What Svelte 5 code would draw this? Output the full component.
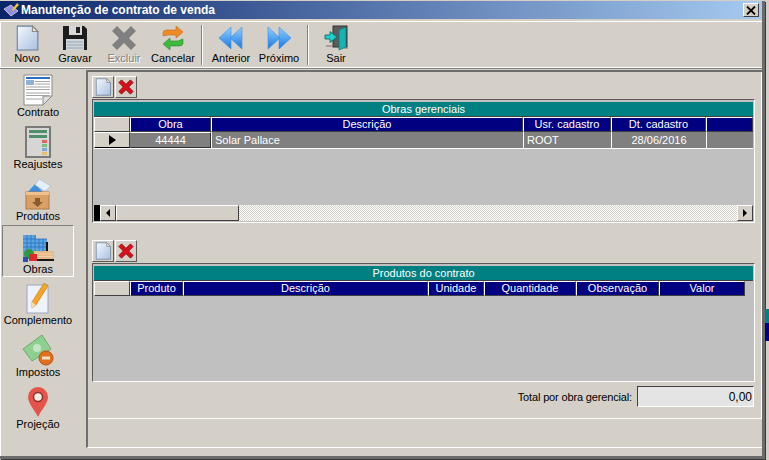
<script>
  const tools = [
    { id: 'novo', label: 'Novo', w: 48 },
    { id: 'gravar', label: 'Gravar', w: 48 },
    { id: 'excluir', label: 'Excluir', w: 50, off: true },
    { id: 'cancelar', label: 'Cancelar', w: 48, sep: true },
    { id: 'anterior', label: 'Anterior', w: 48 },
    { id: 'proximo', label: 'Próximo', w: 48, sep: true },
    { id: 'sair', label: 'Sair', w: 46 }
  ];
  const side = [
    { id: 'contrato', label: 'Contrato' },
    { id: 'reajustes', label: 'Reajustes' },
    { id: 'produtos', label: 'Produtos' },
    { id: 'obras', label: 'Obras', on: true },
    { id: 'complemento', label: 'Complemento' },
    { id: 'impostos', label: 'Impostos' },
    { id: 'projecao', label: 'Projeção' }
  ];
  const obrasCols = [['Obra', 81], ['Descrição', 312], ['Usr. cadastro', 88], ['Dt. cadastro', 95], ['', 47]];
  const prodCols = [['Produto', 53], ['Descrição', 245], ['Unidade', 56], ['Quantidade', 92], ['Observação', 83], ['Valor', 86]];
</script>

{#snippet doc(size)}
  <svg width={size} height={size} viewBox="0 0 24 24">
    <defs><linearGradient id="dg" x1="0" y1="0" x2="1" y2="1"><stop offset="0" stop-color="#f4f8ff"/><stop offset="1" stop-color="#a9c0e0"/></linearGradient></defs>
    <path d="M3 1H17L22 6V23H3Z" fill="url(#dg)" stroke="#6f7f9a"/>
    <path d="M17 1V6H22Z" fill="#e8e8e8" stroke="#8a8a8a"/>
  </svg>
{/snippet}

{#snippet redx()}
  <svg width="16" height="16" viewBox="0 0 18 18">
    <path d="M4 1L9 6L14 1L17 4L12 9L17 14L14 17L9 12L4 17L1 14L6 9L1 4Z" fill="#d8101c" stroke="#8c0a10" stroke-width="1"/>
  </svg>
{/snippet}

{#snippet toolIcon(id)}
  {#if id === 'novo'}
    {@render doc(26)}
  {:else if id === 'gravar'}
    <svg width="26" height="26" viewBox="0 0 26 26">
      <path d="M1 1H22L25 4V25H1Z" fill="#1c1c1c"/>
      <rect x="7" y="1" width="13" height="9" fill="#d8d8d8"/>
      <rect x="14" y="2" width="4" height="6" fill="#222"/>
      <rect x="4" y="14" width="18" height="11" fill="#cfd6dd"/>
      <path d="M5 17H21M5 20H21M5 23H21" stroke="#98a2ad"/>
    </svg>
  {:else if id === 'excluir'}
    <svg width="26" height="26" viewBox="0 0 26 26">
      <path d="M6 1L13 8L20 1L25 6L18 13L25 20L20 25L13 18L6 25L1 20L8 13L1 6Z" fill="#808080"/>
    </svg>
  {:else if id === 'cancelar'}
    <svg width="24" height="26" viewBox="0 0 24 26">
      <path d="M2 11V8Q2 5 6 5H15V1L22 7L15 13V10H7Z" fill="#f08a24" stroke="#c06818" stroke-width=".6"/>
      <path d="M22 14V18Q22 21 18 21H9V25L2 19L9 13V16H17Z" fill="#3ebb3e" stroke="#1f8a28" stroke-width=".6"/>
    </svg>
  {:else if id === 'anterior'}
    <svg width="24" height="24" viewBox="0 0 24 24">
      <defs><linearGradient id="ba" x1="0" y1="0" x2="0" y2="1"><stop offset="0" stop-color="#8fd0ff"/><stop offset="1" stop-color="#1a78e0"/></linearGradient></defs>
      <path d="M0 12L12 1V23Z M11 12L23 1V23Z" fill="url(#ba)" stroke="#3c8fe8" stroke-width=".6"/>
    </svg>
  {:else if id === 'proximo'}
    <svg width="24" height="24" viewBox="0 0 24 24">
      <path d="M24 12L12 1V23Z M13 12L1 1V23Z" fill="url(#ba)" stroke="#3c8fe8" stroke-width=".6"/>
    </svg>
  {:else if id === 'sair'}
    <svg width="24" height="26" viewBox="0 0 24 26">
      <rect x="9" y="1" width="14" height="21" fill="#5c5c5c" stroke="#333"/>
      <path d="M15 5L22 2V22L15 25Z" fill="#14b4b4" stroke="#067070" stroke-width=".7"/>
      <path d="M1 10H6V6.500L13 12L6 17.500V14H1Z" fill="#1cd0d0" stroke="#056060" stroke-width=".8"/>
      <path d="M2 21H8M20 23H24" stroke="#777"/>
    </svg>
  {/if}
{/snippet}

{#snippet sideIcon(id)}
  {#if id === 'contrato'}
    <svg width="30" height="32" viewBox="0 0 30 32">
      <path d="M1 1H29V22L20 31H1Z" fill="#fff" stroke="#8a8a8a"/>
      <path d="M20 31V22H29Z" fill="#dedede" stroke="#8a8a8a"/>
      <rect x="3" y="3" width="24" height="2" fill="#2a6cc8"/>
      <rect x="3" y="6" width="8" height="5" fill="#8fb0d8"/>
      <path d="M12 7.500H27M12 10H27M3 13H27M3 15.500H27M3 19H27M3 21.500H26M3 25H19" stroke="#a4a4a4"/>
    </svg>
  {:else if id === 'reajustes'}
    <svg width="26" height="32" viewBox="0 0 26 32">
      <rect x="1" y="1" width="24" height="30" fill="#d6d6d6" stroke="#7a7a7a" stroke-width="2"/>
      <rect x="4" y="4" width="18" height="3" fill="#4e8f6c"/>
      <rect x="4" y="9" width="18" height="3" fill="#4e8f6c"/>
      <rect x="17" y="14" width="5" height="3" fill="#e26060"/>
      <rect x="17" y="18" width="5" height="3" fill="#79bf79"/>
      <rect x="17" y="22" width="5" height="3" fill="#7fa8de"/>
      <rect x="17" y="26" width="5" height="3" fill="#e6c064"/>
    </svg>
  {:else if id === 'produtos'}
    <svg width="26" height="32" viewBox="0 0 26 32">
      <path d="M2 15L10 6L18 14Z" fill="#3d8fe0"/>
      <path d="M14 1L26 8L20 13L10 7Z" fill="#e6eef8" stroke="#9db8d8" stroke-width=".6"/>
      <rect x="1" y="14" width="23" height="17" fill="#d9a066" stroke="#b07a44"/>
      <rect x="1" y="14" width="23" height="3" fill="#eec28e"/>
      <path d="M10 20H15V24H18L12.500 29L7 24H10Z" fill="#8a5a30"/>
    </svg>
  {:else if id === 'obras'}
    <svg width="32" height="29" viewBox="0 0 32 29">
      <path d="M1 1H14V5H25V25H1Z" fill="#5aa5e0"/>
      <path d="M1 5H25M1 9H25M1 13H25M5 1V19M9 1V19M13 1V19M17 5V19M21 5V19" stroke="#2a70c0" stroke-width=".8"/>
      <rect x="24" y="8" width="2" height="9" fill="#101010"/>
      <rect x="12" y="17" width="20" height="8" fill="#e8b888"/>
      <path d="M13 20H31M13 22.500H31" stroke="#f4d4b0"/>
      <circle cx="7" cy="20" r="5" fill="#2e9a40"/>
      <rect x="7" y="20" width="8" height="7" fill="#e02828"/>
      <rect x="1" y="23" width="5" height="5" fill="#2a50b0"/>
      <rect x="15" y="25" width="17" height="2" fill="#181818"/>
    </svg>
  {:else if id === 'complemento'}
    <svg width="24" height="32" viewBox="0 0 24 32">
      <path d="M1 3H22V31H1Z" fill="#eef2fa" stroke="#9aa8c0"/>
      <path d="M18 1L22 4L10 23L6 26L6 20Z" fill="#f4a428" stroke="#c07a14" stroke-width=".6"/>
      <path d="M6 26L6 20L10 23Z" fill="#f4dcb0"/>
    </svg>
  {:else if id === 'impostos'}
    <svg width="32" height="32" viewBox="0 0 32 32">
      <path d="M1 15L20 1L29 15L10 27Z" fill="#8fcf8f" stroke="#6bae6b"/>
      <circle cx="15" cy="14" r="4" fill="#c4e6c4"/>
      <circle cx="24" cy="24" r="7" fill="#e0701c" stroke="#b85010"/>
      <rect x="20" y="22.500" width="8" height="3" fill="#f4e0c8"/>
    </svg>
  {:else if id === 'projecao'}
    <svg width="22" height="32" viewBox="0 0 22 32">
      <path d="M11 31C8 24 1 18 1 11A10 10 0 0 1 21 11C21 18 14 24 11 31Z" fill="#e5534b"/>
      <circle cx="11" cy="11" r="4.500" fill="#f2ece6" stroke="#8c3030" stroke-width="1.500"/>
    </svg>
  {/if}
{/snippet}

{#snippet miniBar()}
  <div class="minibar">
    <button class="mini">{@render doc(18)}</button>
    <button class="mini">{@render redx()}</button>
  </div>
{/snippet}

<div class="stage">
  <div class="window">
    <header class="title">
      <svg class="appicon" width="16" height="16" viewBox="0 0 16 16">
        <path d="M1 7L8 3L15 9L8 14Z" fill="#8d90d8" stroke="#d8d8f0" stroke-width=".8"/>
        <path d="M9 8L14 1L16 3L10 9Z" fill="#f5c828"/>
      </svg>
      <span class="title-text">Manutenção de contrato de venda</span>
      <button class="close">
        <svg width="10" height="9" viewBox="0 0 10 9"><path d="M1 0.500L9 8.500M9 0.500L1 8.500" stroke="#000" stroke-width="1.800"/></svg>
      </button>
    </header>

    <nav class="toolbar">
      {#each tools as t}
        <div class="tool" class:off={t.off} style="width:{t.w}px">
          <span class="tool-icon">{@render toolIcon(t.id)}</span>
          <span>{t.label}</span>
        </div>
        {#if t.sep}<i class="sep"></i>{/if}
      {/each}
    </nav>

    <div class="body">
      <aside class="side">
        {#each side as s}
          <div class="side-item" class:on={s.on}>
            <span class="side-icon">{@render sideIcon(s.id)}</span>
            <span>{s.label}</span>
          </div>
        {/each}
      </aside>

      <main class="main">
        <div class="panel">
          {@render miniBar()}
          <section class="grid first">
            <div class="caption">Obras gerenciais</div>
            <div class="row">
              <div class="ind"></div>
              {#each obrasCols as c}
                <div class="th" style="width:{c[1]}px">{c[0]}</div>
              {/each}
            </div>
            <div class="row data">
              <div class="ind cur"><b></b></div>
              <div class="td code" style="width:81px">44444</div>
              <div class="td" style="width:312px">Solar Pallace</div>
              <div class="td" style="width:88px">ROOT</div>
              <div class="td mid" style="width:95px">28/06/2016</div>
              <div class="td" style="width:47px"></div>
            </div>
            <div class="blank"></div>
            <div class="scroll">
              <i class="blackbit"></i>
              <button class="sbtn"><b class="left"></b></button>
              <div class="thumb"></div>
              <div class="track"></div>
              <button class="sbtn"><b class="right"></b></button>
            </div>
          </section>

          <div class="gap"></div>
          {@render miniBar()}
          <section class="grid second">
            <div class="caption">Produtos do contrato</div>
            <div class="row">
              <div class="ind"></div>
              {#each prodCols as c}
                <div class="th" style="width:{c[1]}px">{c[0]}</div>
              {/each}
            </div>
            <div class="blank"></div>
          </section>

          <div class="total">
            <label for="tot">Total por obra gerencial:</label>
            <input id="tot" value="0,00" readonly />
          </div>
        </div>
      </main>
    </div>
  </div>
  <div class="behind">
    <i class="t"></i><i class="n"></i>
  </div>
</div>

<style>
  :global(body) { margin: 0; background: #d4d0c8; }
  .stage {
    width: 769px; height: 460px; display: flex; overflow: hidden;
    font: 11px "Liberation Sans", Arial, sans-serif; color: #000; background: #d4d0c8;
  }
  .window {
    width: 762px; height: 455px; margin: 1px 0 0 0; flex: none;
    border-right: 3px solid #6b6b6b; border-bottom: 3px solid #6b6b6b;
    display: flex; flex-direction: column;
    box-shadow: 1px 1px 0 #3a3a3a;
  }
  .title {
    height: 18px; flex: none; display: flex; align-items: center; gap: 2px; padding: 0 2px 0 3px;
    background: linear-gradient(90deg, #0a246a, #a6caf0);
  }
  .appicon { flex: none; }
  .title-text { font: bold 12px "Liberation Sans", Arial, sans-serif; color: #fff; flex: 1; }
  .close {
    width: 16px; height: 14px; padding: 0; margin-right: 1px; display: flex; align-items: center; justify-content: center;
    background: #d4d0c8; border: 1px solid; border-color: #fff #404040 #404040 #fff;
  }
  .toolbar {
    height: 45px; flex: none; margin-top: 2px; padding-left: 2px; display: flex; align-items: stretch;
    border-top: 1px solid #fff; border-left: 1px solid #fff; border-bottom: 1px solid #fff;
    box-shadow: 0 1px 0 #808080;
    box-sizing: content-box;
  }
  .tool { display: flex; flex-direction: column; align-items: center; padding-top: 1px; flex: none; }
  .tool-icon { height: 29px; display: flex; align-items: center; justify-content: center; }
  .tool span:last-child { line-height: 13px; white-space: nowrap; }
  .tool.off { color: #808080; text-shadow: 1px 1px 0 #fff; }
  .sep { width: 2px; margin: 3px 4px 2px 4px; background: #808080; border-right: 1px solid #fff; flex: none; box-sizing: border-box; }
  .body { flex: 1; display: flex; min-height: 0; margin-top: 2px; }
  .side { width: 86px; flex: none; display: flex; flex-direction: column; box-sizing: border-box; padding: 0 0 0 2px; margin-top: -1px; border-left: 1px solid #fff; }
  .side-item {
    width: 72px; height: 52px; flex: none; display: flex; flex-direction: column; align-items: center;
    box-sizing: border-box; line-height: 13px; margin-left: -1px;
  }
  .side-icon { height: 37px; flex: none; display: flex; align-items: flex-end; justify-content: center; }
  .side-item.on { border: 1px solid; border-color: #808080 #fff #fff #808080; }
  .main {
    flex: 1; min-width: 0; margin-top: 0; display: flex; flex-direction: column; box-sizing: border-box;
    border-top: 2px solid #6e6e6e; border-left: 2px solid #6e6e6e; margin-bottom: 8px; border-bottom: 1px solid #fff;
  }
  .panel {
    height: 347px; flex: none; box-sizing: border-box; padding: 4px 5px 0 4px;
    border-right: 1px solid #fff; border-bottom: 1px solid #fff; display: flex; flex-direction: column;
  }
  .minibar { display: flex; gap: 1px; height: 22px; flex: none; }
  .mini {
    width: 22px; height: 22px; padding: 0; display: flex; align-items: center; justify-content: center;
    background: #d4d0c8; border: 1px solid; border-color: #fff #5a5a5a #5a5a5a #fff;
  }
  .grid {
    flex: none; box-sizing: border-box; margin-top: 1px; width: 663px; background: #c0c0c0; padding: 2px 1px 1px 1px;
    border: 1px solid; border-color: #5a5a5a #fff #fff #5a5a5a; display: flex; flex-direction: column;
  }
  .first { height: 124px; }
  .second { height: 119px; }
  .caption {
    height: 15px; flex: none; background: #008080; color: #fff; text-align: center; line-height: 14px;
    border-bottom: 1px solid #404040; box-sizing: border-box; width: 100%;
  }
  .row { display: flex; flex: none; height: 15px; }
  .row.data { height: 17px; border-bottom: 1px solid #fff; background: #808080; box-sizing: border-box; }
  .ind {
    width: 36px; flex: none; box-sizing: border-box; background: #d4d0c8;
    border: 1px solid; border-color: #fff #404040 #404040 #fff; display: flex; align-items: center; justify-content: center;
  }
  .cur { border-bottom-color: #000; }
  .cur b { width: 0; height: 0; border: 5px solid transparent; border-left: 7px solid #000; border-right: 0; }
  .th {
    flex: none; box-sizing: border-box; background: #000080; color: #fff; text-align: center; line-height: 13px;
    border: 1px solid; border-color: #fff #404040 #404040 #fff;
  }
  .td {
    flex: none; box-sizing: border-box; color: #fff; line-height: 17px; padding-left: 3px;
    border-left: 1px solid #fff; white-space: nowrap;
  }
  .td.mid { text-align: center; padding: 0; }
  .td.code { text-align: center; padding: 0; border: 1px solid; border-color: #fff #303030 #303030 #808080; line-height: 15px; }
  .blank { flex: 1; }
  .scroll { height: 16px; flex: none; display: flex; }
  .blackbit { width: 6px; background: #000; flex: none; }
  .sbtn {
    width: 16px; height: 16px; flex: none; padding: 0; background: #d4d0c8; display: flex; align-items: center; justify-content: center;
    border: 1px solid; border-color: #fff #404040 #404040 #fff;
  }
  .sbtn b { width: 0; height: 0; border: 4px solid transparent; }
  .sbtn .left { border-left: 0; border-right: 4px solid #000; }
  .sbtn .right { border-right: 0; border-left: 4px solid #000; }
  .thumb { width: 123px; flex: none; background: #d4d0c8; box-sizing: border-box; border: 1px solid; border-color: #fff #404040 #404040 #fff; }
  .track { flex: 1; background: repeating-conic-gradient(#fff 0 25%, #d4d0c8 0 50%) 0 0 / 2px 2px; }
  .gap { height: 17px; flex: none; }
  .total { display: flex; justify-content: flex-end; align-items: center; gap: 5px; margin-top: 4px; height: 21px; width: 662px; }
  .total label { letter-spacing: -0.15px; }
  .total input {
    width: 117px; height: 21px; box-sizing: border-box; padding: 0 1px 0 0; text-align: right;
    font: 12px "Liberation Sans", Arial, sans-serif; color: #000;
    background: #e4e4e4; border: 1px solid; border-color: #404040 #fff #fff #404040; outline: none;
  }
  .behind { flex: 1; display: flex; flex-direction: column; padding-top: 309px; }
  .behind i { display: block; }
  .behind .t { height: 14px; background: #008080; }
  .behind .n { height: 18px; background: #000080; }
</style>
